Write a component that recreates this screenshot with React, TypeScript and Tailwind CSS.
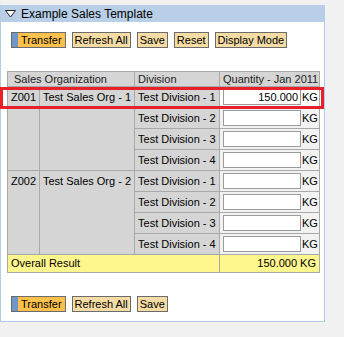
import type { ReactNode } from "react";

type Row = { org?: string; name?: string; division: string; qty: string };

const rows: Row[] = [
  { org: "Z001", name: "Test Sales Org - 1", division: "Test Division - 1", qty: "150.000" },
  { division: "Test Division - 2", qty: "" },
  { division: "Test Division - 3", qty: "" },
  { division: "Test Division - 4", qty: "" },
  { org: "Z002", name: "Test Sales Org - 2", division: "Test Division - 1", qty: "" },
  { division: "Test Division - 2", qty: "" },
  { division: "Test Division - 3", qty: "" },
  { division: "Test Division - 4", qty: "" },
];

const Btn = ({ children, primary }: { children: ReactNode; primary?: boolean }) => (
  <button
    className={
      primary
        ? "flex h-[16px] items-stretch border border-[#6b6b6b] bg-[#ffc04c] text-[11px] leading-none text-black"
        : "flex h-[16px] items-center border border-[#6b6b6b] bg-[#f5dca4] px-[2px] text-[11px] leading-none text-black"
    }
  >
    {primary && <span className="w-[6px] bg-[#6f95c6]" />}
    <span className={primary ? "flex items-center px-[3px]" : ""}>{children}</span>
  </button>
);

const App = () => {
  return (
    <div
      className="h-[337px] w-[344px] bg-[#f1f1f1] pt-[5px]"
      style={{ fontFamily: '"Liberation Sans", Arial, sans-serif' }}
    >
      <div className="relative w-[325px] border border-t-0 border-[#b3cbe6] bg-white pb-[9px]">
        <div className="flex h-[17px] items-center gap-[5px] bg-[#b8cfe7] pl-[4px] text-[12px] text-black">
          <svg width="11" height="8" viewBox="0 0 11 8">
            <path d="M0.5 0.5 H10.5 L5.5 7 Z" fill="white" stroke="#222" strokeWidth="1" />
          </svg>
          <span>Example Sales Template</span>
        </div>

        <div className="flex gap-[6px] pl-[10px] pt-[10px]">
          <Btn primary>Transfer</Btn>
          <Btn>Refresh All</Btn>
          <Btn>Save</Btn>
          <Btn>Reset</Btn>
          <Btn>Display Mode</Btn>
        </div>

        <table className="ml-[6px] mt-[23px] w-[312px] table-fixed border-collapse text-[11px] text-black">
          <colgroup>
            <col className="w-[32px]" />
            <col className="w-[95px]" />
            <col className="w-[85px]" />
            <col className="w-[100px]" />
          </colgroup>
          <thead>
            <tr className="h-[15px] bg-[#d5d5d5] text-[#222]">
              <td colSpan={2} className="border border-[#a9a9a9] pl-[6px] leading-none">
                Sales Organization
              </td>
              <td className="border border-[#a9a9a9] pl-[3px] leading-none">Division</td>
              <td className="whitespace-nowrap border border-[#a9a9a9] pl-[3px] leading-none">Quantity - Jan 2011</td>
            </tr>
          </thead>
          <tbody>
            {rows.map((r, i) => (
              <tr key={i} className="h-[21px]">
                {r.org && (
                  <>
                    <td rowSpan={4} className="border border-[#a9a9a9] bg-[#d5d5d5] px-[3px] align-top">
                      <div className="flex h-[21px] items-center">{r.org}</div>
                    </td>
                    <td rowSpan={4} className="border border-[#a9a9a9] bg-[#d5d5d5] px-[3px] align-top">
                      <div className="flex h-[21px] items-center whitespace-nowrap">{r.name}</div>
                    </td>
                  </>
                )}
                <td className="whitespace-nowrap border border-[#a9a9a9] bg-[#d5d5d5] px-[3px]">{r.division}</td>
                <td className={`border border-[#a9a9a9] pl-[3px] ${i === 0 ? "bg-white" : "bg-[#f2f2f2]"}`}>
                  <div className="flex items-center">
                    <input
                      readOnly
                      value={r.qty}
                      className="h-[16px] w-[78px] border border-[#9a9a9a] bg-white px-[2px] text-right text-[11px] outline-none"
                    />
                    <span className="ml-[1px]">KG</span>
                  </div>
                </td>
              </tr>
            ))}
            <tr className="h-[18px] bg-[#fff68e]">
              <td colSpan={3} className="border border-[#a9a9a9] px-[3px]">Overall Result</td>
              <td className="border border-[#a9a9a9] px-[3px] text-right">150.000 KG</td>
            </tr>
          </tbody>
        </table>

        <div className="flex gap-[6px] pl-[10px] pt-[23px]">
          <Btn primary>Transfer</Btn>
          <Btn>Refresh All</Btn>
          <Btn>Save</Btn>
        </div>

        <div className="pointer-events-none absolute left-[-1px] top-[82px] h-[22px] w-[324px] border-[3px] border-[#e8202a]" />
      </div>
    </div>
  );
};

export default App;
